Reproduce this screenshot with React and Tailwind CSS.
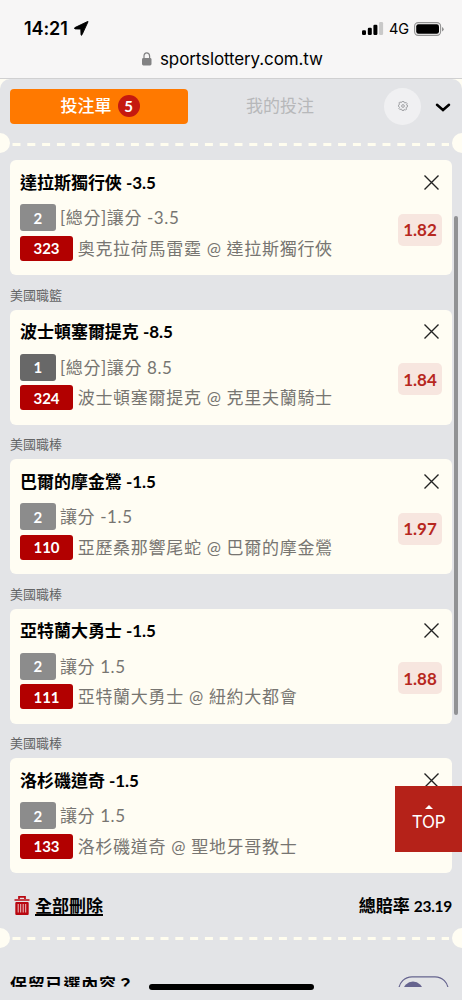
import React from "react";

const bets = [
  { title: "達拉斯獨行俠 -3.5", pick: "2", type: "[總分]讓分 -3.5", code: "323", match: "奧克拉荷馬雷霆 @ 達拉斯獨行俠", odds: "1.82" },
  { league: "美國職籃", title: "波士頓塞爾提克 -8.5", pick: "1", type: "[總分]讓分 8.5", code: "324", match: "波士頓塞爾提克 @ 克里夫蘭騎士", odds: "1.84" },
  { league: "美國職棒", title: "巴爾的摩金鶯 -1.5", pick: "2", type: "讓分 -1.5", code: "110", match: "亞歷桑那響尾蛇 @ 巴爾的摩金鶯", odds: "1.97" },
  { league: "美國職棒", title: "亞特蘭大勇士 -1.5", pick: "2", type: "讓分 1.5", code: "111", match: "亞特蘭大勇士 @ 紐約大都會", odds: "1.88" },
  { league: "美國職棒", title: "洛杉磯道奇 -1.5", pick: "2", type: "讓分 1.5", code: "133", match: "洛杉磯道奇 @ 聖地牙哥教士" },
];

function StatusBar() {
  return (
    <header className="h-[79px] shrink-0 border-b border-[#d0d0d1] bg-[#f7f6f6] font-['Inter',sans-serif] text-black">
      <div className="flex h-[46px] items-center pt-[11px] pl-[24px] pr-[18px]">
        <span className="text-[18px] font-semibold leading-[22px] tracking-[-0.1px]">14:21</span>
        <svg className="ml-[6px] h-[15px] w-[15px]" viewBox="0 0 15 15">
          <path d="M14 .8 8 13.8Q7.2 15 7 13.5L6.8 8.1 1.2 7.9Q-.4 7.5.9 6.6L13.2.7Q14.4.1 14 .8Z" stroke="#000" strokeWidth=".9" />
        </svg>
        <svg className="ml-auto h-[13px] w-[22px]" viewBox="0 0 22 13">
          <rect x="0" y="8.3" width="4" height="4.7" rx="1.2" />
          <rect x="5.8" y="5.8" width="4" height="7.2" rx="1.2" />
          <rect x="11.4" y="2.8" width="4" height="10.2" rx="1.2" />
          <rect x="17.1" y="0" width="4" height="13" rx="1.2" fill="#c9c9c9" />
        </svg>
        <span className="ml-[5px] w-[20px] text-[14.5px] font-normal leading-[22px] tracking-[-0.2px]">4G</span>
        <svg className="ml-[5px] h-[14px] w-[30px]" viewBox="0 0 30 14">
          <rect x=".6" y=".6" width="26" height="12.8" rx="3.6" fill="none" stroke="#929292" strokeWidth="1.1" />
          <rect x="2.2" y="2.2" width="22.8" height="9.6" rx="2.2" />
          <path d="M28 5v4.5Q29.7 8.7 29.7 7.2T28 5Z" fill="#929292" />
        </svg>
      </div>
      <div className="flex h-[25px] items-center pl-[142px]">
        <svg className="h-[14px] w-[10px]" viewBox="0 0 10 14">
          <rect y="6" width="9.5" height="7.5" rx="1.4" fill="#828283" />
          <path d="M2 7V4a2.8 3.2 0 0 1 5.6 0v3" fill="none" stroke="#828283" strokeWidth="1.2" />
        </svg>
        <span className="ml-[8px] text-[17px] leading-[24px] tracking-[-0.12px]">sportslottery.com.tw</span>
      </div>
    </header>
  );
}

function Perforation() {
  return (
    <div className="flex h-[20px] items-center justify-between overflow-hidden">
      <span className="-ml-[10px] h-[20px] w-[20px] shrink-0 rounded-full bg-[#fffdf3]" />
      <svg className="mt-[2px] h-[3px] w-[442px] shrink-0" viewBox="0 0 442 3">
        <path d="M2.5 1.5H439" fill="none" stroke="#fffdef" strokeWidth="3" strokeDasharray="8 6.8" />
      </svg>
      <span className="-mr-[10px] h-[20px] w-[20px] shrink-0 rounded-full bg-[#fffdf3]" />
    </div>
  );
}

function BetCard({ bet }) {
  return (
    <article className="flex h-[114.8px] justify-between rounded-[6px] bg-[#fffdf3] px-[10px]">
      <div className="pt-[9.7px]">
        <h2 className="text-[17px] font-bold leading-[25px] tracking-[-0.03px] text-black">{bet.title}</h2>
        <div className="mt-[9.5px] flex h-[27px] items-center">
          <span className={`flex h-[27px] w-[35.5px] items-center justify-center rounded-[3px] text-[15px] font-bold text-white ${bet.pick === "1" ? "bg-[#686868]" : "bg-[#8c8c8c]"}`}>{bet.pick}</span>
          <span className="ml-[4.5px] whitespace-nowrap text-[17px] leading-[27px] tracking-[0.6px] text-[#777571]">{bet.type}</span>
        </div>
        <div className="mt-[4.5px] flex h-[25px] items-center">
          <span className="flex h-[25px] w-[53px] items-center justify-center rounded-[3px] bg-[#b20000] text-[15px] font-bold text-white">{bet.code}</span>
          <span className="ml-[4.7px] whitespace-nowrap text-[17px] leading-[25px] tracking-[0.7px] text-[#777571]">{bet.match}</span>
        </div>
      </div>
      <div className="flex flex-col items-end">
        <svg className="mr-[3px] mt-[14.5px] h-[15px] w-[15px]" viewBox="0 0 15 15" fill="none" stroke="#222" strokeWidth="1.4">
          <path d="M.5.5l14 14M14.5.5l-14 14" />
        </svg>
        {bet.odds && (
          <span className="mt-[24px] flex h-[32px] w-[44px] items-center justify-center rounded-[5px] bg-[#f7e6df] text-[17px] font-bold text-[#b7281e]">{bet.odds}</span>
        )}
      </div>
    </article>
  );
}

export default function App() {
  return (
    <div className="relative flex h-[1000px] w-[462px] flex-col overflow-hidden bg-[#fffdf3] font-['Lato','Noto_Sans_CJK_TC',sans-serif]">
      <StatusBar />
      <main className="flex-1 overflow-hidden rounded-t-[10px] bg-[#e3e4e7]">
        <nav className="flex h-[54px] items-center pl-[10px] pr-[11px]">
          <button className="flex h-[35px] w-[178px] items-center justify-center rounded-[4px] bg-[#ff7900] pl-[2px] text-[17px] font-medium text-white">
            投注單
            <span className="ml-[6px] flex h-[22px] w-[22px] items-center justify-center rounded-full bg-[#c5190f] text-[15px] font-bold">5</span>
          </button>
          <button className="ml-[58px] text-[17px] text-[#b7b8ba]">我的投注</button>
          <button className="ml-auto flex h-[37px] w-[37px] items-center justify-center rounded-full bg-[#f0f0f2]">
            <svg className="h-[10px] w-[10px]" viewBox="0 0 22 22" fill="none" stroke="#96979a" strokeWidth="1.9">
              <path d="M9 1h4l.7 2.7 1.7.7 2.4-1.4 2.2 2.2-1.4 2.4.7 1.7L21 9v4l-2.7.7-.7 1.7 1.4 2.4-2.2 2.2-2.4-1.4-1.7.7L13 21H9l-.7-2.7-1.7-.7L4.2 19 2 16.8l1.4-2.4-.7-1.7L1 12V9l1.7-.7.7-1.7L2 4.2 4.2 2l2.4 1.4 1.7-.7Z" />
              <circle cx="11" cy="11" r="3" />
            </svg>
          </button>
          <svg className="ml-[14px] mt-[2px] h-[9px] w-[16px]" viewBox="0 0 16 9">
            <path d="M2 1.8 8 7l6-5.2" fill="none" stroke="#000" strokeWidth="2.5" strokeLinecap="round" />
          </svg>
        </nav>
        <Perforation />
        <section className="mt-[7.3px] px-[10px]">
          {bets.map((bet) => (
            <div key={bet.code}>
              {bet.league && <div className="h-[34.7px] pt-[9.8px] text-[13px] leading-[20px] text-[#636466]">{bet.league}</div>}
              <BetCard bet={bet} />
            </div>
          ))}
        </section>
        <div className="mt-[19.9px] flex h-[25px] items-center justify-between pl-[14px] pr-[10px] text-[17px] font-bold">
          <button className="flex items-center">
            <svg className="h-[19px] w-[16px]" viewBox="0 0 16 19">
              <path d="M5 3V.9h6V3M.5 4h15" fill="none" stroke="#b90710" strokeWidth="1.7" />
              <rect x="1.3" y="6" width="13.4" height="13" rx="1" fill="#b90710" />
              <path d="M4.2 8v8.5M6.7 8v8.5M9.2 8v8.5M11.7 8v8.5" stroke="#f1dadd" strokeWidth=".9" />
            </svg>
            <span className="ml-[5px] underline decoration-[1.5px] underline-offset-[2px]">全部刪除</span>
          </button>
          <span className="text-[17px]">總賠率<span className="ml-[4px] text-[15.5px] tracking-[-0.3px]">23.19</span></span>
        </div>
        <div className="mt-[10px]"><Perforation /></div>
        <div className="mt-[25px] flex h-[14px] items-start justify-between overflow-hidden pl-[10px] pr-[13px]">
          <span className="mt-[-1px] text-[17px] font-bold leading-[25px] tracking-[0.8px]">保留已選內容？</span>
          <svg className="mt-[3px] h-[28px] w-[51px] shrink-0" viewBox="0 0 51 28">
            <rect x=".8" y=".8" width="49.4" height="26.4" rx="13.2" fill="none" stroke="#66648f" strokeWidth="1.2" />
            <circle cx="15" cy="15.5" r="10" fill="#66648f" />
          </svg>
        </div>
      </main>
      <div className="absolute left-[454px] top-[216px] h-[499px] w-[4px] rounded-full bg-[#919294]" />
      <button className="absolute left-[395px] top-[786px] flex h-[66px] w-[67px] flex-col items-center bg-[#b52219] pt-[19px] font-['Inter',sans-serif] text-[17px] leading-[27px] tracking-[-0.3px] text-white">
        <svg className="h-[4px] w-[8px] shrink-0" viewBox="0 0 8 4"><path d="M0 4 4 0l4 4Z" fill="white" /></svg>
        TOP
      </button>
      <div className="absolute left-[149px] top-[984px] h-[6px] w-[165px] rounded-full bg-black" />
    </div>
  );
}
